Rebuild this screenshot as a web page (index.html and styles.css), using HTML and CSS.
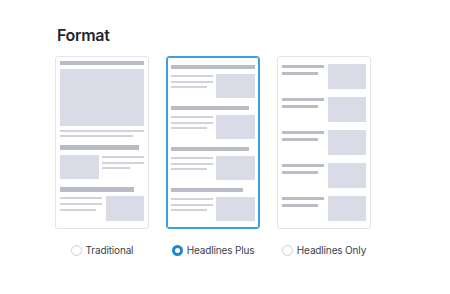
FILE: index.html
```html
<!DOCTYPE html>
<html lang="en">
<head>
<meta charset="utf-8">
<title>Format</title>
<link rel="stylesheet" href="styles.css">
</head>
<body>
<main class="page">
  <h2 class="title">Format</h2>
  <div class="options">
    <label class="option">
      <div class="card card-trad">
        <div class="bar t-bar1"></div>
        <div class="img t-hero"></div>
        <div class="line t-line1"></div>
        <div class="line t-line2"></div>
        <div class="bar t-bar2"></div>
        <div class="row t-row1">
          <div class="img t-thumb"></div>
          <div class="lines t-lines-r">
            <div class="line"></div>
            <div class="line"></div>
            <div class="line short"></div>
          </div>
        </div>
        <div class="bar t-bar3"></div>
        <div class="row t-row2">
          <div class="lines t-lines-l">
            <div class="line"></div>
            <div class="line"></div>
            <div class="line short"></div>
          </div>
          <div class="img t-thumb2"></div>
        </div>
      </div>
      <span class="choice"><span class="radio"></span>Traditional</span>
    </label>

    <label class="option">
      <div class="card card-plus selected">
        <div class="sec">
          <div class="bar p-bar w-full"></div>
          <div class="row p-row">
            <div class="lines p-lines"><div class="line"></div><div class="line"></div><div class="line short"></div></div>
            <div class="img p-thumb"></div>
          </div>
        </div>
        <div class="sec">
          <div class="bar p-bar w-a"></div>
          <div class="row p-row">
            <div class="lines p-lines"><div class="line"></div><div class="line"></div><div class="line short"></div></div>
            <div class="img p-thumb"></div>
          </div>
        </div>
        <div class="sec">
          <div class="bar p-bar w-a"></div>
          <div class="row p-row">
            <div class="lines p-lines"><div class="line"></div><div class="line"></div><div class="line short"></div></div>
            <div class="img p-thumb"></div>
          </div>
        </div>
        <div class="sec">
          <div class="bar p-bar w-b"></div>
          <div class="row p-row">
            <div class="lines p-lines"><div class="line"></div><div class="line"></div><div class="line short"></div></div>
            <div class="img p-thumb"></div>
          </div>
        </div>
      </div>
      <span class="choice"><span class="radio checked"></span>Headlines Plus</span>
    </label>

    <label class="option">
      <div class="card card-only">
        <div class="row o-row"><div class="lines o-lines"><div class="hl"></div><div class="hl short"></div></div><div class="img o-thumb"></div></div>
        <div class="row o-row"><div class="lines o-lines"><div class="hl"></div><div class="hl short"></div></div><div class="img o-thumb"></div></div>
        <div class="row o-row"><div class="lines o-lines"><div class="hl"></div><div class="hl short"></div></div><div class="img o-thumb"></div></div>
        <div class="row o-row"><div class="lines o-lines"><div class="hl"></div><div class="hl short"></div></div><div class="img o-thumb"></div></div>
        <div class="row o-row"><div class="lines o-lines"><div class="hl"></div><div class="hl short"></div></div><div class="img o-thumb"></div></div>
      </div>
      <span class="choice"><span class="radio"></span>Headlines Only</span>
    </label>
  </div>
</main>
</body>
</html>
```

FILE: styles.css
```css
* { box-sizing: border-box; }

html, body {
  margin: 0;
  background: #ffffff;
}

body {
  font-family: Inter, "Noto Sans", "Liberation Sans", sans-serif;
  color: #3b3e4b;
}

.page {
  padding: 25px 0 0 55px;
}

.title {
  margin: 0 0 11px 2px;
  font-size: 16px;
  line-height: 20px;
  font-weight: 600;
  letter-spacing: -0.3px;
  color: #23262f;
}

.options {
  display: flex;
  gap: 17px;
}

.option {
  width: 94px;
  display: flex;
  flex-direction: column;
  align-items: center;
  cursor: pointer;
}

.card {
  width: 94px;
  height: 173px;
  border: 1px solid #e3e4e9;
  border-radius: 3px;
  padding: 4px 4px 0 4px;
  display: flex;
  flex-direction: column;
  background: #ffffff;
}

.card.selected {
  border-color: #3aa2d9;
  box-shadow: inset 0 0 0 1px #3aa2d9;
}

.bar { background: #b9bbc6; }
.img { background: #d9dbe6; }
.line { height: 2px; background: #d2d3da; }
.hl { height: 3px; background: #b9bbc6; width: 100%; }

.row { display: flex; }
.lines { display: flex; flex-direction: column; }

/* Traditional */
.t-bar1 { height: 4px; width: 100%; }
.t-hero { height: 57px; margin-top: 4px; }
.t-line1 { margin-top: 4px; width: 100%; }
.t-line2 { margin-top: 3px; width: 73px; }
.t-bar2 { height: 5px; width: 79px; margin-top: 8px; }
.t-row1 { height: 24px; margin-top: 5px; gap: 3px; }
.t-thumb { width: 39px; flex: none; }
.t-lines-r { flex: 1; padding-top: 1px; gap: 3.5px; }
.t-lines-r .short { width: 28px; }
.t-bar3 { height: 5px; width: 74px; margin-top: 8px; }
.t-row2 { height: 25px; margin-top: 4px; gap: 4px; }
.t-lines-l { width: 42px; flex: none; padding-top: 1px; gap: 4px; }
.t-lines-l .short { width: 36px; }
.t-thumb2 { flex: 1; }

/* Headlines Plus */
.card-plus { padding-top: 8px; gap: 8px; }
.sec { display: flex; flex-direction: column; }
.p-bar { height: 4px; margin-bottom: 5px; }
.w-full { width: 100%; }
.w-a { width: 78px; }
.w-b { width: 72px; }
.p-row { height: 24px; gap: 3px; }
.p-lines { width: 42px; flex: none; padding-top: 1px; gap: 3.5px; }
.p-lines .short { width: 36px; }
.p-thumb { flex: 1; }

/* Headlines Only */
.card-only { padding-top: 7px; gap: 8px; }
.o-row { height: 25px; gap: 4px; }
.o-lines { width: 42px; flex: none; padding-top: 1px; gap: 3.5px; }
.o-lines .short { width: 36px; }
.o-thumb { flex: 1; }

/* Radio labels */
.choice {
  margin-top: 14px;
  display: flex;
  align-items: center;
  gap: 4px;
  font-size: 10px;
  line-height: 14px;
  letter-spacing: -0.15px;
  color: #3b3e4b;
  white-space: nowrap;
}

.radio {
  width: 11px;
  height: 11px;
  border-radius: 50%;
  border: 1px solid #cfd0d7;
  background: #ffffff;
  flex: none;
}

.radio.checked {
  border: 3.5px solid #1f86cf;
}
```
